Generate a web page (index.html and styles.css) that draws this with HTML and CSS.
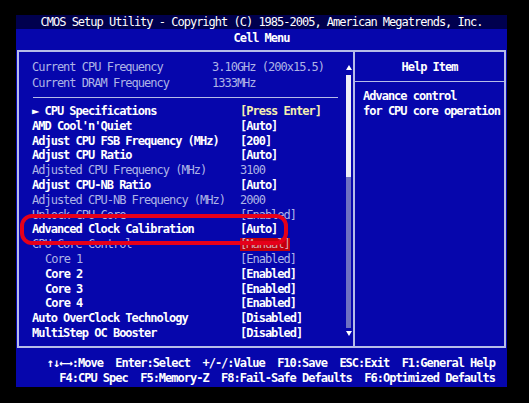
FILE: index.html
```
<!DOCTYPE html>
<html lang="en">
<head>
  <meta charset="UTF-8" />
  <title>Cell Menu</title>
  <link rel="stylesheet" href="styles.css">
</head>
<body>

  <div class="screen">
    <div class="title">CMOS Setup Utility - Copyright (C) 1985-2005, American Megatrends, Inc.</div>
    <div class="menu-name">Cell Menu</div>

    <div class="frame">
      <!-- SETTINGS LIST -->
      <div class="settings">
        <div class="items">
          <div class="info">
            <div class="row dim"><span>Current CPU Frequency</span><span>3.10GHz (200x15.5)</span></div>
            <div class="row dim"><span>Current DRAM Frequency</span><span>1333MHz</span></div>
          </div>
          <div class="rule"></div>
          <div class="list">
            <div class="row"><span>&#9658; CPU Specifications</span><span class="enter">[Press Enter]</span></div>
            <div class="row"><span>AMD Cool'n'Quiet</span><span>[Auto]</span></div>
            <div class="row"><span>Adjust CPU FSB Frequency (MHz)</span><span>[200]</span></div>
            <div class="row"><span>Adjust CPU Ratio</span><span>[Auto]</span></div>
            <div class="row dim"><span>Adjusted CPU Frequency (MHz)</span><span>3100</span></div>
            <div class="row"><span>Adjust CPU-NB Ratio</span><span>[Auto]</span></div>
            <div class="row dim"><span>Adjusted CPU-NB Frequency (MHz)</span><span>2000</span></div>
            <div class="row dim"><span>Unlock CPU Core</span><span>[Enabled]</span></div>
            <div class="row"><span>Advanced Clock Calibration</span><span>[Auto]</span></div>
            <div class="row dim"><span>CPU Core Control</span><span><span class="picked">[Manual]</span></span></div>
            <div class="row dim sub"><span>Core 1</span><span>[Enabled]</span></div>
            <div class="row sub"><span>Core 2</span><span>[Enabled]</span></div>
            <div class="row sub"><span>Core 3</span><span>[Enabled]</span></div>
            <div class="row sub"><span>Core 4</span><span>[Enabled]</span></div>
            <div class="row"><span>Auto OverClock Technology</span><span>[Disabled]</span></div>
            <div class="row"><span>MultiStep OC Booster</span><span>[Disabled]</span></div>
          </div>
        </div>
        <div class="scrollbar">
          <div class="arrow up"></div>
          <div class="thumb"></div>
          <div class="track"></div>
          <div class="arrow down"></div>
        </div>
      </div>

      <!-- HELP PANEL -->
      <div class="help">
        <div class="help-head">Help Item</div>
        <div class="help-text">Advance control<br>for CPU core operation</div>
      </div>
    </div>

    <div class="keys">
      <div class="key-line">&#8593;&#8595;&#8592;&#8594;:Move  Enter:Select  +/-/:Value  F10:Save  ESC:Exit  F1:General Help</div>
      <div class="key-line">F4:CPU Spec  F5:Memory-Z  F8:Fail-Safe Defaults  F6:Optimized Defaults</div>
    </div>

    <div class="mark"></div>
  </div>

</body>
</html>
```

FILE: styles.css
```
html, body {
  margin: 0; padding: 0;
  background: #000;
  font-family: 'DejaVu Sans Mono', 'Liberation Mono', monospace;
  font-size: 12px;
  letter-spacing: -1px;
  color: #fff;
}
.screen {
  position: relative;
  width: 491px;
  margin: 15px 0 0 16px;
  background: #0606ac;
}
.title {
  height: 14px;
  line-height: 14px;
  background: #00004e;
  text-align: center;
  white-space: pre;
}
.menu-name {
  height: 21px;
  line-height: 18px;
  text-align: center;
  font-weight: bold;
}
.frame {
  display: flex;
  height: 294px;
  margin: 0 1px;
  border: 2px solid #b6bce8;
}
.settings {
  display: flex;
  width: 334px;
  border-right: 2px solid #b6bce8;
}
.items {
  width: 314px;
  padding: 7px 0 0 13px;
}
.row {
  display: grid;
  grid-template-columns: 208px 1fr;
  white-space: pre;
  font-weight: bold;
}
.info .row {
  grid-template-columns: 180px 1fr;
  line-height: 16px;
}
.list .row { line-height: 14.8px; }
.row.dim {
  color: #aeb4e6;
  font-weight: normal;
}
.row.sub span:first-child { padding-left: 13px; }
.enter { color: #f4eeb0; }
.picked {
  display: inline-block;
  line-height: 13px;
  background: #c4000c;
  color: #d8a8b0;
}
.rule {
  height: 1px;
  margin: 6px 8px 6px 1px;
  background: #b6bce8;
}
.list { margin-top: 2px; }

/* scroll bar */
.scrollbar {
  width: 6px;
  padding-top: 13px;
}
.arrow {
  width: 0; height: 0;
  border-left: 3px solid transparent;
  border-right: 3px solid transparent;
}
.arrow.up { border-bottom: 5px solid #fff; margin-bottom: 5px; }
.arrow.down { border-top: 5px solid #fff; margin-top: 3px; }
.thumb {
  width: 5px;
  height: 102px;
  background: #eeeef6;
}
.track {
  width: 5px;
  height: 151px;
  background: #6e70c2;
}

/* help panel */
.help {
  flex: 1;
}
.help-head {
  height: 22px;
  padding-top: 7px;
  line-height: 16px;
  text-align: center;
  font-weight: bold;
  border-bottom: 1px solid #b6bce8;
}
.help-text {
  padding: 7px 0 0 8px;
  line-height: 15px;
  font-weight: bold;
  white-space: pre;
}

/* key legend */
.keys {
  height: 31px;
  padding: 8px 12px 0 0;
  line-height: 15px;
  text-align: right;
  font-weight: bold;
}
.key-line { white-space: pre; }

.mark {
  position: absolute;
  left: 4px;
  top: 199px;
  width: 268px;
  height: 31px;
  box-sizing: border-box;
  border: 4px solid #e6001a;
  border-radius: 12px;
}
```
